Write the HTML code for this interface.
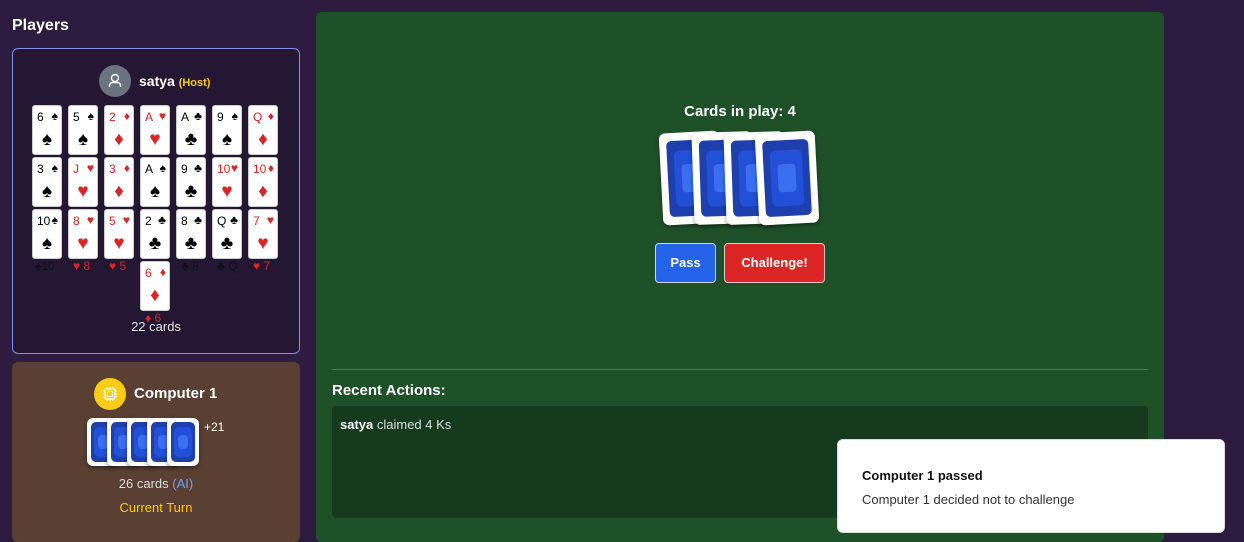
<!DOCTYPE html>
<html><head><style>
*{box-sizing:border-box;margin:0;padding:0}
body{width:1244px;height:534px;background:#2d1c3f;font-family:"Liberation Sans",sans-serif;position:relative;overflow:hidden;color:#fff}
.abs{position:absolute}
.card{position:absolute;width:30px;height:50px;background:#fff;border-radius:3px;border:1px solid #ccc;font-size:12px}
.card .t{position:absolute;left:4px;top:4px}
.card .s{position:absolute;right:3px;top:3px;font-size:12px}
.card .c{position:absolute;left:0;right:0;top:23px;text-align:center;font-size:19px}
.r{color:#dc2626}.b{color:#000}
.back{position:absolute;background:#fff;border-radius:6px;box-shadow:0 2px 4px rgba(0,0,0,.4)}
.back i{position:absolute;background:#1e40af;border-radius:5px}
.back i b{position:absolute;background:#2350d8;border-radius:5px}
.back i b u{position:absolute;background:#3b6ff0;border-radius:4px}
.lbl{position:absolute;font-size:12px;top:259px}
</style></head><body>
<div class="abs" style="left:12px;top:17px;font-size:16px;font-weight:bold">Players</div>
<div class="abs" style="left:12px;top:48px;width:288px;height:306px;background:#241733;border:1px solid #8090e8;border-radius:6px"></div>
<div class="abs" style="left:99px;top:65px;width:32px;height:32px;border-radius:50%;background:#6b7280"><svg width="32" height="32" viewBox="0 0 32 32"><circle cx="16" cy="13" r="3.5" fill="none" stroke="#fff" stroke-width="1.4"/><path d="M10.5 22v-1.5a3 3 0 0 1 3-3h5a3 3 0 0 1 3 3V22" fill="none" stroke="#fff" stroke-width="1.4"/></svg></div>
<div class="abs" style="left:139px;top:73px;font-size:14px;font-weight:bold">satya <span style="color:#facc15;font-size:11px">(Host)</span></div>
<div id="hand"></div>
<div class="lbl b" style="left:35px;color:#111">♠10</div>
<div class="lbl r" style="left:73px">♥ 8</div>
<div class="lbl r" style="left:109px">♥ 5</div>
<div class="lbl" style="left:181px;color:#111">♣ 8</div>
<div class="lbl" style="left:217px;color:#111">♣ Q</div>
<div class="lbl r" style="left:253px">♥ 7</div>
<div class="lbl r" style="left:145px;top:311px">♦ 6</div>
<div class="abs" style="left:0;width:312px;top:319px;text-align:center;font-size:13px;color:#e5e5e5">22 cards</div>

<div class="abs" style="left:12px;top:362px;width:288px;height:180px;background:#5a4032;border-radius:6px"></div>
<div class="abs" style="left:94px;top:378px;width:32px;height:32px;border-radius:50%;background:#facc15"><svg width="32" height="32" viewBox="0 0 32 32"><rect x="11" y="11" width="10" height="10" rx="1.5" fill="none" stroke="#fff" stroke-width="1.3"/><rect x="13.5" y="13.5" width="5" height="5" fill="none" stroke="#fff" stroke-width="1"/><path d="M13 9v2M16 9v2M19 9v2M13 21v2M16 21v2M19 21v2M9 13h2M9 16h2M9 19h2M21 13h2M21 16h2M21 19h2" stroke="#fff" stroke-width="1"/></svg></div>
<div class="abs" style="left:134px;top:385px;font-size:15px;font-weight:bold">Computer 1</div>
<div id="cb"></div>
<div class="abs" style="left:204px;top:420px;font-size:12px">+21</div>
<div class="abs" style="left:0;width:312px;top:476px;text-align:center;font-size:13px;color:#ddd">26 cards <span style="color:#60a5fa">(AI)</span></div>
<div class="abs" style="left:0;width:312px;top:500px;text-align:center;font-size:13px;color:#facc15">Current Turn</div>

<div class="abs" style="left:316px;top:12px;width:848px;height:530px;background:#1f5128;border-radius:6px"></div>
<div class="abs" style="left:316px;width:848px;top:103px;text-align:center;font-size:15px;font-weight:bold">Cards in play: 4</div>
<div id="play"></div>
<div class="abs" style="left:655px;top:243px;width:61px;height:40px;background:#2563eb;border:1px solid #cbd5e1;border-radius:4px;text-align:center;line-height:38px;font-size:13px;font-weight:bold">Pass</div>
<div class="abs" style="left:724px;top:243px;width:101px;height:40px;background:#dc2626;border:1px solid #e5c5c5;border-radius:4px;text-align:center;line-height:38px;font-size:13px;font-weight:bold">Challenge!</div>
<div class="abs" style="left:332px;top:369px;width:816px;height:1px;background:#4a7a55"></div>
<div class="abs" style="left:332px;top:382px;font-size:15px;font-weight:bold">Recent Actions:</div>
<div class="abs" style="left:332px;top:406px;width:816px;height:112px;background:#153a1e;border-radius:4px"></div>
<div class="abs" style="left:340px;top:417px;font-size:13px;color:#ddd"><b style="color:#fff">satya</b> claimed 4 Ks</div>
<div class="abs" style="left:837px;top:439px;width:388px;height:94px;background:#fff;border-radius:6px;border:1px solid #ddd;color:#111">
<div style="position:absolute;left:24px;top:28px;font-size:13px;font-weight:bold">Computer 1 passed</div>
<div style="position:absolute;left:24px;top:52px;font-size:13px;color:#333">Computer 1 decided not to challenge</div></div>
<script>
var h=[["6","♠","b"],["5","♠","b"],["2","♦","r"],["A","♥","r"],["A","♣","b"],["9","♠","b"],["Q","♦","r"],
["3","♠","b"],["J","♥","r"],["3","♦","r"],["A","♠","b"],["9","♣","b"],["10","♥","r"],["10","♦","r"],
["10","♠","b"],["8","♥","r"],["5","♥","r"],["2","♣","b"],["8","♣","b"],["Q","♣","b"],["7","♥","r"],["6","♦","r"]];
var s="";h.forEach(function(c,i){var x=32+36*(i%7),y=105+52*Math.floor(i/7);if(i==21){x=140;y=261;}
s+='<div class="card '+c[2]+'" style="left:'+x+'px;top:'+y+'px"><span class="t">'+c[0]+'</span><span class="s">'+c[1]+'</span><span class="c">'+c[1]+'</span></div>';});
document.getElementById("hand").innerHTML=s;
s="";for(var i=0;i<5;i++){s+='<div class="back" style="left:'+(87+20*i)+'px;top:418px;width:32px;height:48px"><i style="left:4px;top:4px;right:4px;bottom:4px"><b style="left:3px;top:5px;right:3px;bottom:5px"><u style="left:4px;top:8px;right:4px;bottom:8px"></u></b></i></div>';}
document.getElementById("cb").innerHTML=s;
s="";var rot=[-3,-2,-2,-3];for(var i=0;i<4;i++){s+='<div class="back" style="left:'+(661+32*i)+'px;top:132px;width:60px;height:92px;transform:rotate('+rot[i]+'deg)"><i style="left:7px;top:8px;right:7px;bottom:8px"><b style="left:7px;top:10px;right:7px;bottom:10px"><u style="left:7px;top:14px;right:7px;bottom:14px"></u></b></i></div>';}
document.getElementById("play").innerHTML=s;
</script>
</body></html>
